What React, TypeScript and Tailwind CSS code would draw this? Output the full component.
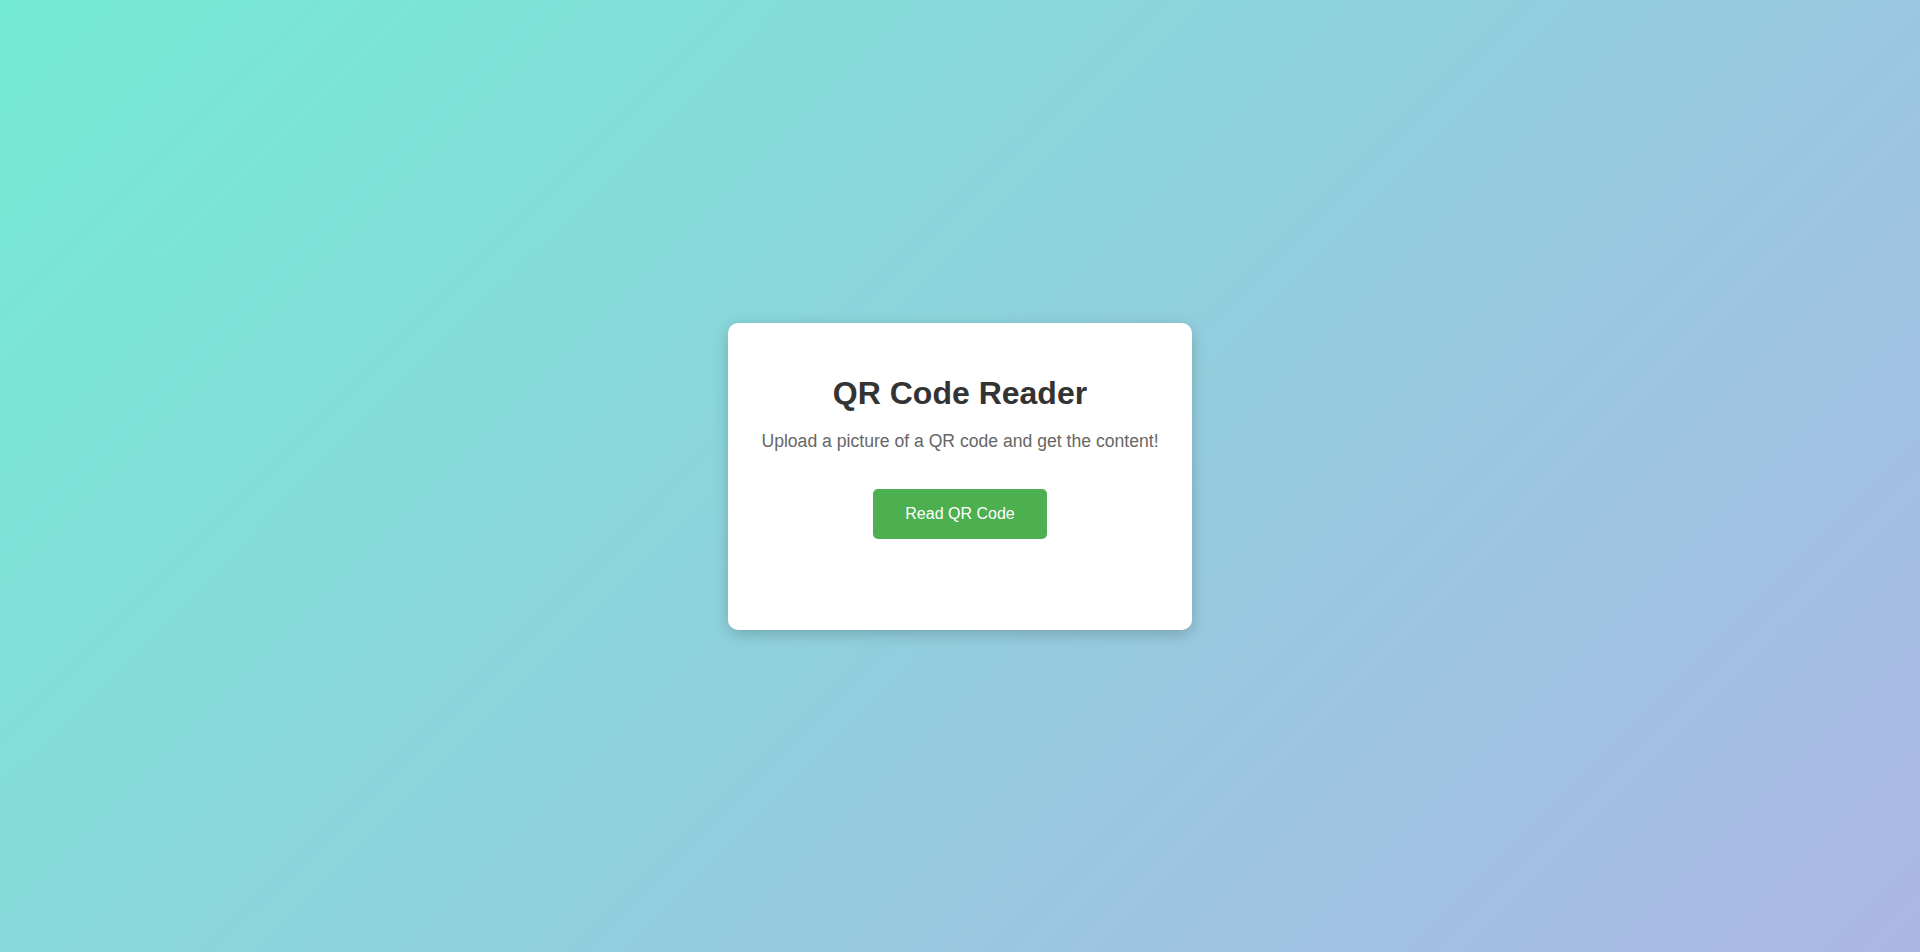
import React from 'react';

export default function App() {
  const handleRead = () => {
    // picker would open here
  };

  return (
    <div
      className="flex h-[952px] w-full items-center justify-center bg-[linear-gradient(135deg,#74ebd5,#acb6e5)]"
      style={{ fontFamily: '"Liberation Sans", Arial, sans-serif' }}
    >
      <div className="flex h-[307px] w-[464px] flex-col items-center rounded-[10px] bg-white pt-[52px] text-center shadow-[0_4px_15px_rgba(0,0,0,0.2)]">
        <h1 className="text-[32px] leading-[37px] font-bold text-[#333]">QR Code Reader</h1>
        <p className="mt-[19px] text-[17.6px] leading-[20px] text-[#666]">
          Upload a picture of a QR code and get the content!
        </p>
        <button
          className="mt-[38px] h-[50px] w-[174px] cursor-pointer rounded-[5px] bg-[#4caf50] text-[16px] text-white hover:bg-[#45a049]"
          onClick={handleRead}
        >
          Read QR Code
        </button>
      </div>
    </div>
  );
}
